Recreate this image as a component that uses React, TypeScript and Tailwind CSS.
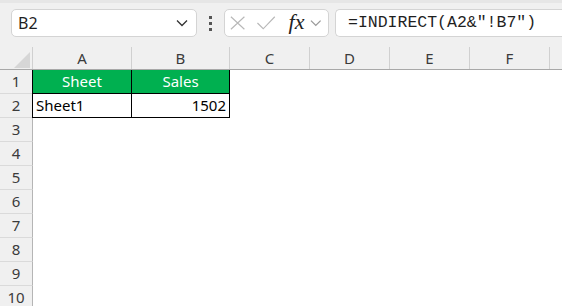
import React from "react";

const cols = [
  { label: "A", w: "w-[99px]" },
  { label: "B", w: "w-[98px]" },
  { label: "C", w: "w-[80px]" },
  { label: "D", w: "w-[80px]" },
  { label: "E", w: "w-[80px]" },
  { label: "F", w: "w-[80px]" },
  { label: "", w: "w-[40px]" },
];

const rows = [3, 4, 5, 6, 7, 8, 9, 10];

function Chevron({ className }: { className?: string }) {
  return (
    <svg className={className} width="12" height="8" viewBox="0 0 12 8" fill="none">
      <path d="M1 1.5 L6 6.5 L11 1.5" stroke="currentColor" strokeWidth="1.3" />
    </svg>
  );
}

function RowHead({ n }: { n: number }) {
  return (
    <div className="w-[33px] shrink-0 border-r border-b border-r-[#b5b5b5] border-b-[#dadada] bg-[#f0f0f0] flex items-center justify-center text-[15px] text-[#3b3b3b]">
      {n}
    </div>
  );
}

export default function App() {
  return (
    <div
      className="w-[562px] h-[306px] overflow-hidden bg-white"
      style={{ fontFamily: '"Noto Sans", "Open Sans", sans-serif' }}
    >
      {/* Formula bar */}
      <div className="h-[47px] bg-[#f0f0f0] border-t-[3px] border-[#e6e6e6] flex items-start pt-[6px]">
        <div className="ml-[11px] w-[186px] h-[28px] bg-white border border-[#d4d4d4] rounded-[5px] flex items-center pl-[6px] pr-[8px]">
          <span className="text-[16px] text-[#1f1f1f] flex-1">B2</span>
          <Chevron className="text-[#333]" />
        </div>
        <div className="w-[27px] h-[28px] flex flex-col items-center justify-center gap-[3px]">
          <span className="w-[3px] h-[3px] bg-[#555]" />
          <span className="w-[3px] h-[3px] bg-[#555]" />
          <span className="w-[3px] h-[3px] bg-[#555]" />
        </div>
        <div className="w-[105px] h-[28px] bg-white border border-[#d4d4d4] rounded-[5px] flex items-center pl-[4px] pr-[6px]">
          <svg width="18" height="16" viewBox="0 0 18 16" fill="none">
            <path d="M2 1.5 L16 14.5 M16 1.5 L2 14.5" stroke="#b8b8b8" strokeWidth="1.2" />
          </svg>
          <svg className="ml-[10px]" width="21" height="16" viewBox="0 0 21 16" fill="none">
            <path d="M1.5 8 L7.5 14 L19.5 1.5" stroke="#b8b8b8" strokeWidth="1.2" />
          </svg>
          <span
            className="ml-[12px] text-[22px] italic text-[#222] leading-none -mt-[3px]"
            style={{ fontFamily: '"Liberation Serif", serif' }}
          >
            fx
          </span>
          <Chevron className="ml-[6px] text-[#999]" />
        </div>
        <div className="ml-[6px] flex-1 h-[28px] bg-white border border-r-0 border-[#d4d4d4] rounded-l-[5px] flex items-center pl-[12px]">
          <span
            className="text-[16.5px] text-[#1f1f1f]"
            style={{ fontFamily: '"Liberation Mono", monospace' }}
          >
            =INDIRECT(A2&amp;"!B7")
          </span>
        </div>
      </div>

      {/* Column headers */}
      <div className="flex h-[23px] bg-[#f0f0f0] border-b border-[#a8a8a8]">
        <div className="w-[33px] shrink-0 border-r border-[#d0d0d0] relative">
          <svg className="absolute left-[14px] top-[5px]" width="16" height="16" viewBox="0 0 16 16">
            <path d="M16 0 L16 16 L0 16 Z" fill="#d6d6d6" />
          </svg>
        </div>
        {cols.map((c) => (
          <div
            key={c.label + c.w}
            className={`${c.w} shrink-0 border-r border-[#d0d0d0] flex items-center justify-center text-[15px] text-[#3b3b3b]`}
          >
            {c.label}
          </div>
        ))}
      </div>

      {/* Row 1 */}
      <div className="flex h-[24px]">
        <RowHead n={1} />
        <div className="-ml-px w-[100px] shrink-0 bg-[#00b050] border-l border-r border-b border-black flex items-center justify-center text-[15px] text-white">
          Sheet
        </div>
        <div className="w-[98px] shrink-0 bg-[#00b050] border-r border-b border-black flex items-center justify-center text-[15px] text-white">
          Sales
        </div>
      </div>

      {/* Row 2 */}
      <div className="flex h-[24px]">
        <RowHead n={2} />
        <div className="-ml-px w-[100px] shrink-0 border-l border-r border-b border-black flex items-center pl-[3px] text-[15px] text-black">
          Sheet1
        </div>
        <div className="w-[98px] shrink-0 border-r border-b border-black flex items-center justify-end pr-[3px] text-[15px] text-black">
          1502
        </div>
      </div>

      {rows.map((n) => (
        <div key={n} className="flex h-[24px]">
          <RowHead n={n} />
        </div>
      ))}
    </div>
  );
}
